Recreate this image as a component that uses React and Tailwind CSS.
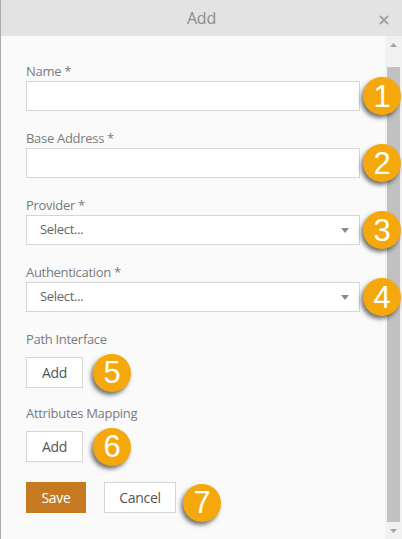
import React from "react";

const labelCls =
  "block h-[19px] leading-[19px] text-[13px] text-[#7a7a7a] font-['Open_Sans',sans-serif] tracking-[-0.3px]";

function Badge({ n, className = "" }) {
  return (
    <div
      className={`w-[38px] h-[38px] shrink-0 rounded-full bg-[#f5a80c] flex items-center justify-center text-white text-[31px] leading-none font-['Liberation_Sans',Arial,sans-serif] shadow-[-2px_3px_4px_rgba(0,0,0,0.55)] ${className}`}
    >
      {n}
    </div>
  );
}

function Caret() {
  return (
    <svg width="8" height="5" viewBox="0 0 8 5" className="shrink-0">
      <path d="M0 0h8L4 5z" fill="#8a8a8a" />
    </svg>
  );
}

function TextField({ label, n }) {
  return (
    <div className="mb-[18px]">
      <label className={labelCls}>{label}</label>
      <div className="relative">
        <input
          type="text"
          className="block w-full h-[30px] bg-white border border-[#d6d6d6] outline-none"
        />
        <Badge n={n} className="absolute left-[calc(100%+3px)] top-1/2 -translate-y-1/2 z-10" />
      </div>
    </div>
  );
}

function SelectField({ label, n }) {
  return (
    <div className="mb-[18px]">
      <label className={labelCls}>{label}</label>
      <div className="relative">
        <div className="flex items-center justify-between h-[30px] bg-white border border-[#d6d6d6] pl-[13px] pr-[10px]">
          <span className="text-[13px] text-[#666] font-['Open_Sans',sans-serif] tracking-[-0.3px]">
            Select...
          </span>
          <Caret />
        </div>
        <Badge n={n} className="absolute left-[calc(100%+3px)] top-1/2 -translate-y-1/2 z-10" />
      </div>
    </div>
  );
}

function AddRow({ label, n, last }) {
  return (
    <div className={last ? "mb-[20px]" : "mb-[16px]"}>
      <label className={`${labelCls} mb-[8px]`}>{label}</label>
      <div className="flex items-center">
        <button className="w-[57px] h-[31px] bg-white border border-[#d6d6d6] text-[14px] text-[#555] font-['Open_Sans',sans-serif] tracking-[-0.3px]">
          Add
        </button>
        <Badge n={n} className="ml-[10px] -my-[4px]" />
      </div>
    </div>
  );
}

export default function App() {
  return (
    <div className="w-[402px] h-[539px] flex flex-col bg-[#fafafa] border-l border-[#a9a9a9] overflow-hidden">
      {/* title bar */}
      <div className="relative h-[36px] shrink-0 bg-[#e3e3e3] flex items-center justify-center">
        <span className="text-[16px] text-[#8c8c8c] font-['Open_Sans',sans-serif] tracking-[-0.2px]">
          Add
        </span>
        <svg
          className="absolute left-[378px] top-[15px]"
          width="10"
          height="10"
          viewBox="0 0 10 10"
        >
          <path d="M1 1l8 8M9 1l-8 8" stroke="#a3a3a3" strokeWidth="2" />
        </svg>
      </div>

      <div className="flex-1 flex min-h-0">
        {/* form body */}
        <div className="flex-1 pl-[25px] pr-[25px] pt-[26px] relative">
          <TextField label="Name *" n="1" />
          <TextField label="Base Address *" n="2" />
          <SelectField label="Provider *" n="3" />
          <SelectField label="Authentication *" n="4" />
          <AddRow label="Path Interface" n="5" />
          <AddRow label="Attributes Mapping" n="6" last />
          <div className="flex items-center">
            <button className="w-[60px] h-[31px] bg-[#c57a21] text-white text-[14px] font-['Open_Sans',sans-serif] tracking-[-0.3px]">
              Save
            </button>
            <button className="ml-[18px] w-[72px] h-[31px] bg-white border border-[#d6d6d6] text-[14px] text-[#555] font-['Open_Sans',sans-serif] tracking-[-0.3px]">
              Cancel
            </button>
            <Badge n="7" className="ml-[7px] -my-[4px] translate-y-[5px]" />
          </div>
        </div>

        {/* scrollbar */}
        <div className="w-[17px] shrink-0 bg-[#f1f1f1] flex flex-col">
          <div className="h-[17px] flex items-center justify-center">
            <svg width="7" height="4" viewBox="0 0 7 4">
              <path d="M0 4h7L3.5 0z" fill="#a3a3a3" />
            </svg>
          </div>
          <div className="flex-1 pt-[14px] px-[2px]">
            <div className="h-full bg-[#c1c1c1]" />
          </div>
          <div className="h-[17px] flex items-center justify-center">
            <svg width="7" height="4" viewBox="0 0 7 4">
              <path d="M0 0h7L3.5 4z" fill="#a3a3a3" />
            </svg>
          </div>
        </div>
      </div>
    </div>
  );
}
